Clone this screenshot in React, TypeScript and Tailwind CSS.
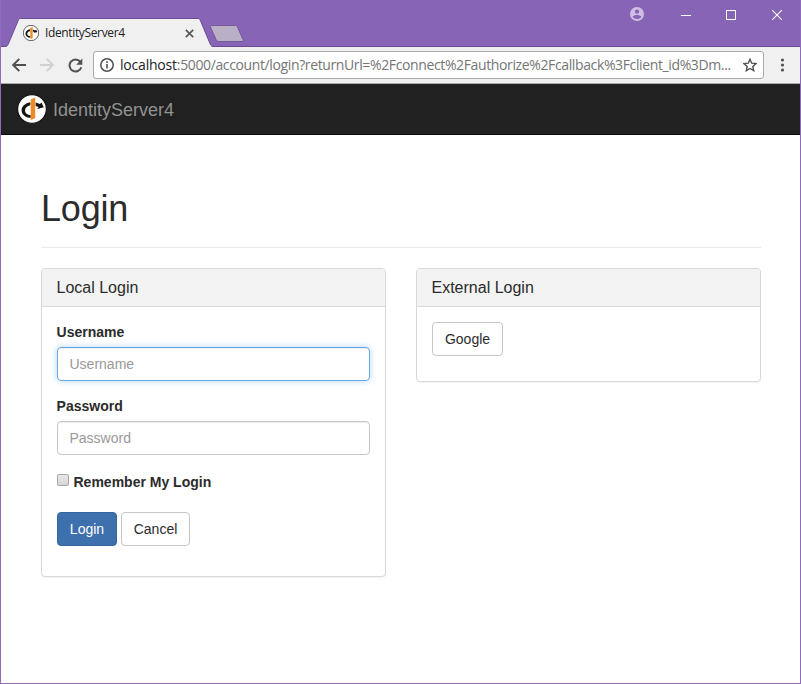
import React from "react";

function Logo({ className }: { className: string }) {
  return (
    <svg viewBox="0 0 30 30" className={className}>
      <circle cx="15" cy="15" r="14.4" fill="#fff" stroke="#111" strokeWidth="1.2" />
      <path d="M13.400 8.200C8 9.200 4.600 12.200 4.600 16.200c0 4.300 3.600 7.400 9.200 7.600v-2.600c-3.600-.3-5.800-2.200-5.800-4.800 0-2.500 2-4.500 5.400-5.200z" fill="#151515" />
      <path d="M13.700 5.400l4.500-1.900v20.800l-4.500 1.800z" fill="#f08a24" />
      <path d="M18.700 8.600l4.300 1.500 1.400-1.500 2.400 4.600-6.600 1.900 1.200-2-2.700-1.100z" fill="#151515" />
    </svg>
  );
}

function TitleBar() {
  return (
    <div className="relative box-content h-[46px] border-b border-[#6b4b94] bg-[#8864b6]">
      <svg className="absolute left-0 top-0" width="260" height="47" viewBox="1 0 260 47">
        <path d="M1 47H4.5C7 47 7.6 45.500 8.300 44L18.200 20.600C18.700 19.300 19.200 18.500 20.500 18.500H198C199.300 18.500 199.900 19.300 200.400 20.600L210.200 44C211 46 212 47 214 47z" fill="#f0f0f0" />
        <path d="M1 46.5H4.500C7 46.500 7.600 45.500 8.300 44L18.200 20.600C18.700 19.300 19.200 18.500 20.500 18.500H198C199.300 18.500 199.900 19.300 200.400 20.600L210.200 44C211 46 212 46.500 214 46.500" fill="none" stroke="#6b4b94" />
        <path d="M8 47L9 44h200.500L211 47z" fill="#f0f0f0" />
        <path d="M212 25.500H235.500C236.500 25.500 237 26 237.400 27L243 39.500C243.500 41 243 41.500 242 41.500H219C217.500 41.500 216.500 41 216 39.500L210.500 27C210.100 26 210.500 25.500 212 25.500z" fill="#b9b0c8" stroke="#765799" />
      </svg>
      <div className="relative flex h-[46px] items-start pl-[22px]">
        <Logo className="mt-[25px] h-4 w-4" />
        <span className="ml-1.5 mt-[25px] w-[140px] whitespace-nowrap font-['Open_Sans',sans-serif] text-[12px] leading-4 tracking-[-0.36px] text-[#222]">IdentityServer4</span>
        <svg className="mt-[29px]" width="9" height="9" viewBox="0 0 9 9"><path d="M.8.8l7.400 7.400M8.200.8L.8 8.200" stroke="#5a5a5a" strokeWidth="1.700" /></svg>
        <div className="ml-auto flex items-start">
          <svg className="mr-[37px] mt-[7px]" width="14" height="14" viewBox="0 0 14 14">
            <circle cx="7" cy="7" r="7" fill="#cfc0e2" />
            <circle cx="7" cy="4.600" r="2.200" fill="#8864b6" />
            <path d="M2.600 9.800C3.400 8.300 5.500 7.900 7 7.900s3.600.4 4.400 1.900C10.500 11.200 9 12 7 12s-3.500-.8-4.400-2.200z" fill="#8864b6" />
          </svg>
          <div className="mr-[35px] mt-[15px] h-px w-2.5 bg-white" />
          <div className="mr-9 mt-[10px] h-2.5 w-2.5 border border-white" />
          <svg className="mr-[18px] mt-[10px]" width="10" height="10" viewBox="0 0 10 10"><path d="M.2.2l9.600 9.600M9.800.2L.2 9.800" stroke="#fff" strokeWidth="1.100" /></svg>
        </div>
      </div>
    </div>
  );
}

function Toolbar() {
  return (
    <div className="box-content flex h-9 items-center border-b border-[#a9a9a9] bg-[#f0f0f0] pl-[11px]">
      <svg width="14" height="14" viewBox="0 0 14 14"><path d="M14 7H1.500M7.300.8L1.200 7l6.100 6.200" fill="none" stroke="#505050" strokeWidth="1.900" /></svg>
      <svg className="ml-[14px]" width="14" height="14" viewBox="0 0 14 14"><path d="M0 7h12.500M6.700.8L12.800 7l-6.100 6.200" fill="none" stroke="#d0d0d0" strokeWidth="1.900" /></svg>
      <svg className="ml-[14px]" width="15" height="15" viewBox="0 0 15 15">
        <path d="M12.200 3.600A6 6 0 1 0 13.300 9.200" fill="none" stroke="#505050" strokeWidth="2" />
        <path d="M14.300.6v6.200H8.200z" fill="#505050" />
      </svg>
      <div className="ml-[10px] flex h-7 w-[671px] items-center rounded-[3px] border border-[#a9a9a9] bg-white pl-[6px] pr-[6px]">
        <svg className="shrink-0" width="14" height="14" viewBox="0 0 14 14">
          <circle cx="7" cy="7" r="6.200" fill="none" stroke="#505050" strokeWidth="1.500" />
          <path d="M6.200 6h1.600v4.500H6.200zM6.200 3.300h1.600v1.600H6.200z" fill="#505050" />
        </svg>
        <span className="ml-[6px] whitespace-nowrap font-['Open_Sans',sans-serif] text-[14px] leading-5 tracking-[-0.375px] text-[#757575]">
          <span className="tracking-[-0.2px] text-[#222]">localhost</span>:5000/account/login?returnUrl=%2Fconnect%2Fauthorize%2Fcallback%3Fclient_id%3Dm...
        </span>
        <svg className="ml-auto shrink-0" width="14" height="14" viewBox="0 0 14 14"><path d="M7 1.300l1.700 3.900 4.300.4-3.200 2.900.9 4.200L7 10.500l-3.700 2.200.9-4.200L1 5.600l4.300-.4z" fill="none" stroke="#505050" strokeWidth="1.400" /></svg>
      </div>
      <svg className="ml-[16px]" width="5" height="14" viewBox="0 0 5 14"><g fill="#505050"><circle cx="2.500" cy="2" r="1.600" /><circle cx="2.500" cy="7" r="1.600" /><circle cx="2.500" cy="12" r="1.600" /></g></svg>
    </div>
  );
}

function Panel({ title, children }: { title: string; children: React.ReactNode }) {
  return (
    <section className="w-[345px] shrink-0 rounded-[4px] border border-[#d9d9d9] bg-white shadow-[0_1px_1px_rgba(0,0,0,0.05)]">
      <h3 className="h-[38px] rounded-t-[3px] border-b border-[#d9d9d9] bg-[#f3f3f3] pl-[14.5px] text-[16px] leading-[37px] text-[#2b2b2b]">{title}</h3>
      <div className="p-[15px] pb-[30px]">{children}</div>
    </section>
  );
}

const button = "h-[34px] rounded-[4px] border px-[11px] text-[14px] leading-5";
const input = "block h-[34px] w-full rounded-[4px] border px-[11.5px] text-[14px] outline-none placeholder:text-[#999]";
const label = "mb-[5px] -ml-[0.4px] block font-bold";

export default function App() {
  return (
    <div className="h-[684px] w-[801px] overflow-hidden border-x border-b border-[#8e6cbb] bg-white font-['Liberation_Sans',Arial,sans-serif] text-[14px] leading-5 text-[#2b2b2b]">
      <TitleBar />
      <Toolbar />
      <nav className="flex h-[51px] items-center border-b border-[#080808] bg-[#212121] pl-4 text-[18px] text-[#929292]">
        <Logo className="mr-[6px] h-[30px] w-[30px]" />
        <span className="pt-0.5">IdentityServer4</span>
      </nav>
      <main className="px-10 pt-[54px]">
        <h1 className="mb-5 h-[59px] w-[720px] border-b border-[#e9e9e9] text-[36px] leading-[40px] tracking-[-0.2px]">Login</h1>
        <div className="flex items-start gap-[30px]">
          <Panel title="Local Login">
            <label className={label} htmlFor="u">Username</label>
            <input id="u" placeholder="Username" className={`${input} mb-[15px] border-[#66a7e4] shadow-[inset_0_1px_1px_rgba(0,0,0,0.075),0_0_6px_rgba(102,175,233,0.5)]`} />
            <label className={label} htmlFor="p">Password</label>
            <input id="p" placeholder="Password" className={`${input} border-[#c6c6c6] shadow-[inset_0_1px_1px_rgba(0,0,0,0.075)]`} />
            <label className="mt-[17px] flex h-5 items-start font-bold">
              <input type="checkbox" className="mr-[4.500px] mt-[2px] h-3 w-3 appearance-none rounded-[2px] border border-[#a8a8a8] bg-linear-to-b from-[#e8e8e8] to-[#d6d6d6]" />
              Remember My Login
            </label>
            <div className="mt-5 flex gap-1">
              <button className={`${button} w-[60px] border-[#34659c] bg-[#3d70ad] text-white`}>Login</button>
              <button className={`${button} w-[69px] border-[#c6c6c6]`}>Cancel</button>
            </div>
          </Panel>
          <Panel title="External Login">
            <button className={`${button} mb-[-5px] block w-[71px] border-[#c6c6c6]`}>Google</button>
          </Panel>
        </div>
      </main>
    </div>
  );
}
